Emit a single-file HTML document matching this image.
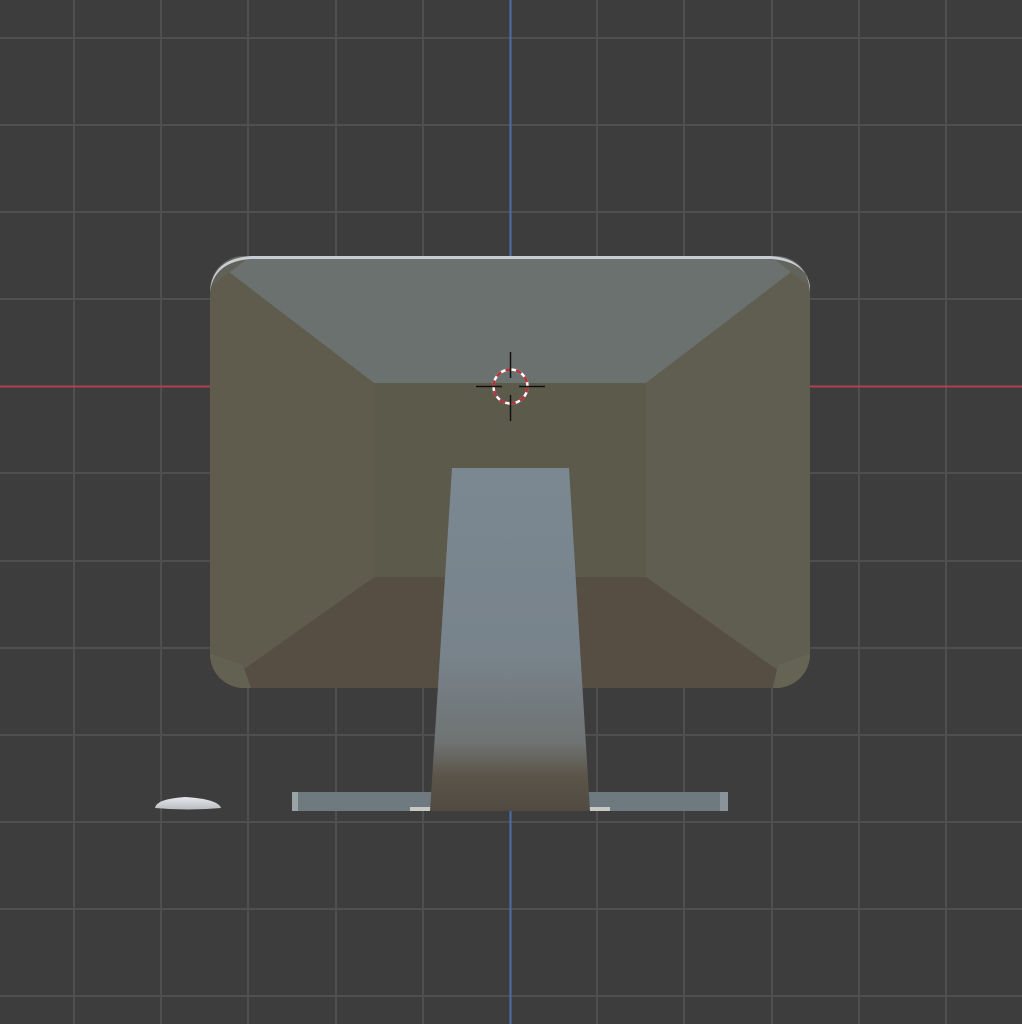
<!DOCTYPE html>
<html><head><meta charset="utf-8"><style>
html,body{margin:0;padding:0;background:#3d3d3d;}
svg{display:block}
</style></head><body>
<svg width="1022" height="1024" viewBox="0 0 1022 1024" xmlns="http://www.w3.org/2000/svg">
<defs>
<linearGradient id="st" x1="0" y1="0" x2="0" y2="1">
<stop offset="0" stop-color="#7b8892"/>
<stop offset="0.55" stop-color="#78838b"/>
<stop offset="0.8" stop-color="#6f7373"/>
<stop offset="0.9" stop-color="#5a5449"/>
<stop offset="1" stop-color="#514a41"/>
</linearGradient>
<linearGradient id="mo" x1="0" y1="0" x2="0" y2="1">
<stop offset="0" stop-color="#e6e8ec"/>
<stop offset="1" stop-color="#b9bcc2"/>
</linearGradient>
<clipPath id="mon"><rect x="210" y="256" width="600" height="432" rx="34"/></clipPath>
</defs>
<rect width="1022" height="1024" fill="#3d3d3d"/>
<g stroke="#4f4f4f" stroke-width="2">
<line x1="74" y1="0" x2="74" y2="1024"/><line x1="161" y1="0" x2="161" y2="1024"/>
<line x1="248" y1="0" x2="248" y2="1024"/><line x1="336" y1="0" x2="336" y2="1024"/>
<line x1="423" y1="0" x2="423" y2="1024"/><line x1="597" y1="0" x2="597" y2="1024"/>
<line x1="684" y1="0" x2="684" y2="1024"/><line x1="772" y1="0" x2="772" y2="1024"/>
<line x1="859" y1="0" x2="859" y2="1024"/><line x1="946" y1="0" x2="946" y2="1024"/>
<line x1="0" y1="38" x2="1022" y2="38"/><line x1="0" y1="125" x2="1022" y2="125"/>
<line x1="0" y1="212" x2="1022" y2="212"/><line x1="0" y1="299" x2="1022" y2="299"/>
<line x1="0" y1="473" x2="1022" y2="473"/><line x1="0" y1="561" x2="1022" y2="561"/>
<line x1="0" y1="648" x2="1022" y2="648"/><line x1="0" y1="735" x2="1022" y2="735"/>
<line x1="0" y1="822" x2="1022" y2="822"/><line x1="0" y1="909" x2="1022" y2="909"/>
<line x1="0" y1="996" x2="1022" y2="996"/>
</g>
<line x1="0" y1="386.5" x2="1022" y2="386.5" stroke="#b0404f" stroke-width="2"/>
<line x1="510.5" y1="0" x2="510.5" y2="1024" stroke="#4a6ea5" stroke-width="2"/>
<!-- monitor -->
<g clip-path="url(#mon)">
<rect x="200" y="250" width="620" height="450" fill="#5f5c4f"/>
<polygon points="200,250 820,250 646,383 374,383" fill="#6b716f"/>
<polygon points="820,250 820,700 646,577 646,383" fill="#605e51"/>
<polygon points="200,700 820,700 646,577 374,577" fill="#564e43"/>
<polygon points="200,250 374,383 374,577 200,700" fill="#5f5c4e"/>
<rect x="374" y="383" width="272" height="194" fill="#5c5a4b"/>
<!-- corner bevels -->
<polygon points="200,250 255,250 243,262 200,295" fill="#606157"/>
<polygon points="820,250 765,250 778,262 820,295" fill="#62635a"/>
<polygon points="200,700 255,700 243,665 200,650" fill="#636152"/>
<polygon points="820,700 770,700 778,665 820,650" fill="#656353"/>
</g>
<path d="M210,292 Q212,258 252,256 L770,256 Q808,258 810,292 L810,286 Q806,262 772,259 L250,259 Q214,262 210,292 Z" fill="#c8ccd4"/>
<!-- base plate -->
<rect x="292" y="792" width="436" height="19" fill="#6f7a80"/>
<rect x="292" y="792" width="6" height="19" fill="#9aa3a8"/>
<rect x="720" y="792" width="8" height="19" fill="#8a9399"/>
<rect x="410" y="807" width="200" height="4" fill="#c8c8c4"/>
<!-- stand -->
<polygon points="452,468 569,468 590,811 430,811" fill="url(#st)"/>
<!-- mouse -->
<path d="M155,808 Q156,799 185,797 Q218,799 221,808 Q188,811 155,808 Z" fill="url(#mo)"/>
<!-- 3D cursor -->
<circle cx="510.5" cy="386.5" r="17" fill="none" stroke="#ffffff" stroke-width="2.5"/>
<circle cx="510.5" cy="386.5" r="17" fill="none" stroke="#b5323a" stroke-width="2.5" stroke-dasharray="6 4.7"/>
<g stroke="#111" stroke-width="1.5">
<line x1="510.5" y1="352" x2="510.5" y2="378"/>
<line x1="510.5" y1="395" x2="510.5" y2="421"/>
<line x1="476" y1="386.5" x2="502" y2="386.5"/>
<line x1="519" y1="386.5" x2="545" y2="386.5"/>
</g>
</svg>
</body></html>
